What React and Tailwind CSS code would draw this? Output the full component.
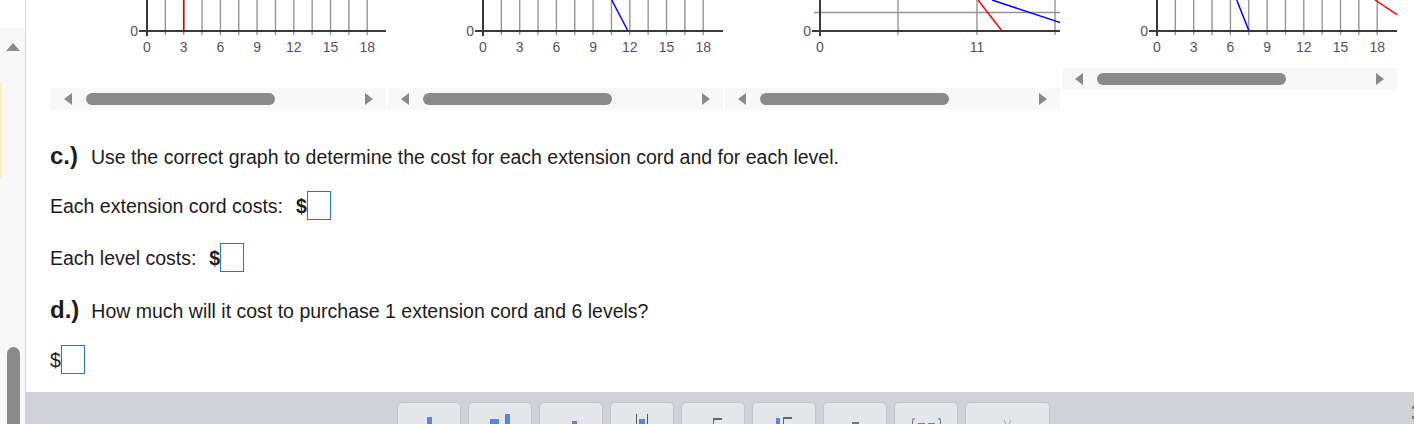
import React from 'react';

const GRID = '#959595';
const AXIS = '#3a3a3a';
const LABEL = '#555555';

const STEP = 18.35;

// ticks every 1.5 units, labels every 3 units (0..18)
const LinearAxisGraph = ({ origin, height, lines }) => {
  const ticks = Array.from({ length: 13 }, (_, i) => origin + i * STEP);
  return (
    <svg width="335" height={height} className="block">
      {ticks.map((x, i) =>
        i === 0 ? null : (
          <line key={i} x1={x} y1="0" x2={x} y2="35" stroke={GRID} strokeWidth="1.4" />
        )
      )}
      {lines}
      <line x1={origin - 8} y1="31" x2="335" y2="31" stroke={AXIS} strokeWidth="2" />
      <line x1={origin} y1="0" x2={origin} y2="36" stroke={AXIS} strokeWidth="2" />
      <text x={origin - 9} y="36" textAnchor="end" fontSize="14" fill={LABEL} fontFamily="Liberation Sans, Arial, sans-serif">
        0
      </text>
      {[0, 3, 6, 9, 12, 15, 18].map((v, i) => (
        <text
          key={v}
          x={origin + i * 2 * STEP}
          y="52"
          textAnchor="middle"
          fontSize="14"
          fill={LABEL}
          fontFamily="Liberation Sans, Arial, sans-serif"
        >
          {v}
        </text>
      ))}
    </svg>
  );
};

const WideGraph = () => (
  <svg width="335" height="88" className="block">
    {[173, 252, 330].map((x) => (
      <line key={x} x1={x} y1="0" x2={x} y2="35" stroke={GRID} strokeWidth="1.4" />
    ))}
    <line x1="89" y1="12.5" x2="335" y2="12.5" stroke={GRID} strokeWidth="1.4" />
    <line x1="253" y1="0" x2="277" y2="31" stroke="#ff0000" strokeWidth="1.5" />
    <line x1="267" y1="0" x2="336" y2="22.8" stroke="#0000ff" strokeWidth="1.5" />
    <line x1="87" y1="31" x2="335" y2="31" stroke={AXIS} strokeWidth="2" />
    <line x1="95" y1="0" x2="95" y2="36" stroke={AXIS} strokeWidth="2" />
    <text x="86" y="36" textAnchor="end" fontSize="14" fill={LABEL} fontFamily="Liberation Sans, Arial, sans-serif">
      0
    </text>
    <text x="95" y="52" textAnchor="middle" fontSize="14" fill={LABEL} fontFamily="Liberation Sans, Arial, sans-serif">
      0
    </text>
    <text x="252" y="52" textAnchor="middle" fontSize="14" fill={LABEL} fontFamily="Liberation Sans, Arial, sans-serif">
      11
    </text>
  </svg>
);

const ScrollTrack = () => (
  <div className="flex h-[22px] w-[335px] items-center bg-[#f8f8f8]">
    <div className="ml-[13px] h-0 w-0 border-y-[6px] border-r-[8px] border-y-transparent border-r-[#8a8a8a]" />
    <div className="ml-[14px] h-[12px] w-[189px] rounded-full bg-[#8a8a8a]" />
    <div className="ml-[90px] h-0 w-0 border-y-[6px] border-l-[8px] border-y-transparent border-l-[#8a8a8a]" />
  </div>
);

const AnswerBox = () => <span className="inline-block h-[29px] w-[24px] border border-[#2d6fd2] bg-white" />;

const keys = [
  { w: 'w-[64px]', icon: <span className="mt-[14px] h-[10px] w-[5px] bg-[#5b86d8]" /> },
  {
    w: 'w-[64px]',
    icon: (
      <span className="mt-[14px] flex items-end gap-[6px]">
        <span className="h-[5px] w-[9px] bg-[#5b86d8]" />
        <span className="h-[10px] w-[5px] bg-[#5b86d8]" />
      </span>
    ),
  },
  { w: 'w-[64px]', icon: <span className="ml-[6px] mt-[18px] h-[6px] w-[5px] bg-[#5b86d8]" /> },
  {
    w: 'w-[64px]',
    icon: (
      <span className="mt-[14px] flex items-end gap-[2px]">
        <span className="h-[10px] w-[1px] bg-[#555]" />
        <span className="h-[5px] w-[6px] bg-[#5b86d8]" />
        <span className="h-[10px] w-[1px] bg-[#555]" />
      </span>
    ),
  },
  {
    w: 'w-[64px]',
    icon: (
      <span className="ml-[8px] mt-[15px] flex">
        <span className="h-[9px] w-[1px] bg-[#666]" />
        <span className="h-[2px] w-[8px] bg-[#666]" />
      </span>
    ),
  },
  {
    w: 'w-[64px]',
    icon: (
      <span className="mt-[14px] flex items-start gap-[3px]">
        <span className="mt-[1px] h-[9px] w-[4px] bg-[#5b86d8]" />
        <span className="flex">
          <span className="h-[10px] w-[1px] bg-[#666]" />
          <span className="h-[2px] w-[8px] bg-[#666]" />
        </span>
      </span>
    ),
  },
  { w: 'w-[64px]', icon: <span className="mt-[19px] h-[5px] w-[7px] bg-[#777]" /> },
  {
    w: 'w-[64px]',
    icon: (
      <span className="mt-[15px] flex items-start gap-[3px]">
        <span className="h-[9px] w-[3px] rounded-l-full border-l border-t border-[#777]" />
        <span className="mt-[5px] h-[4px] w-[7px] bg-[#5b86d8]" />
        <span className="mt-[5px] h-[4px] w-[7px] bg-[#5b86d8]" />
        <span className="h-[9px] w-[3px] rounded-r-full border-r border-t border-[#777]" />
      </span>
    ),
  },
  {
    w: 'w-[85px]',
    icon: (
      <span className="mt-[17px] flex gap-[3px]">
        <span className="h-[7px] w-[1px] rotate-[-20deg] bg-[#aaa]" />
        <span className="h-[7px] w-[1px] rotate-[20deg] bg-[#aaa]" />
      </span>
    ),
  },
];

export default function App() {
  return (
    <div className="flex h-[424px] w-[1414px] overflow-hidden bg-white font-['Liberation_Sans',Arial,sans-serif] text-[#1c1c1c]">
      {/* left page scrollbar */}
      <div className="relative flex w-[26px] shrink-0 flex-col border-r border-[#d4d7dd]">
        <div className="h-[28px]" />
        <div className="relative flex flex-1 flex-col items-center bg-[#f8f8f8] pl-[2px] pr-[1px]">
          <div className="mt-[15px] h-0 w-0 border-x-[7px] border-b-[8px] border-x-transparent border-b-[#8a8a8a]" />
          <div className="mt-auto h-[77px] w-[13px] rounded-t-full bg-[#8a8a8a]" />
        </div>
        <div className="absolute left-0 top-[82px] h-[96px] w-[2px] bg-[#fcefc0]" />
      </div>

      <div className="relative flex flex-1 flex-col">
        {/* graphs, scrolled up */}
        <div className="flex items-start gap-[2px] pl-[25px]">
          <div className="flex flex-col">
            <LinearAxisGraph
              origin={96}
              height={88}
              lines={<line x1="132.7" y1="0" x2="132.7" y2="31" stroke="#e00000" strokeWidth="1.6" />}
            />
            <ScrollTrack />
          </div>
          <div className="flex flex-col">
            <LinearAxisGraph
              origin={95}
              height={88}
              lines={<line x1="223.7" y1="0" x2="240" y2="31" stroke="#0000ff" strokeWidth="1.5" />}
            />
            <ScrollTrack />
          </div>
          <div className="flex flex-col">
            <WideGraph />
            <ScrollTrack />
          </div>
          <div className="flex flex-col">
            <LinearAxisGraph
              origin={95}
              height={68}
              lines={
                <>
                  <line x1="174.7" y1="0" x2="187" y2="31" stroke="#0000ff" strokeWidth="1.5" />
                  <line x1="313" y1="0" x2="337" y2="16" stroke="#ff0000" strokeWidth="1.5" />
                </>
              }
            />
            <ScrollTrack />
          </div>
        </div>

        {/* questions */}
        <div className="flex flex-col pl-[24px] text-[19.5px] leading-[24px]">
          <div className="mt-[34px] flex items-baseline">
            <span className="text-[24px] font-bold">c.)</span>
            <span className="ml-[13px]">
              Use the correct graph to determine the cost for each extension cord and for each level.
            </span>
          </div>
          <div className="mt-[22px] flex h-[29px] items-center">
            <span>Each extension cord costs:</span>
            <span className="ml-[13px] font-bold">$</span>
            <AnswerBox />
          </div>
          <div className="mt-[23px] flex h-[29px] items-center">
            <span>Each level costs:</span>
            <span className="ml-[13px] font-bold">$</span>
            <AnswerBox />
          </div>
          <div className="mt-[26px] flex items-baseline">
            <span className="text-[24px] font-bold">d.)</span>
            <span className="ml-[12px]">How much will it cost to purchase 1 extension cord and 6 levels?</span>
          </div>
          <div className="mt-[22px] flex h-[29px] items-center">
            <span>$</span>
            <AnswerBox />
          </div>
        </div>

        {/* math keyboard */}
        <div className="mt-auto flex h-[32px] gap-[7px] bg-[#d0d2d7] pl-[371px] pt-[10px]">
          {keys.map((k, i) => (
            <div
              key={i}
              className={`${k.w} flex justify-center rounded-t-[5px] border border-b-0 border-[#c3c5ca] bg-[#e5e6e9]`}
            >
              {k.icon}
            </div>
          ))}
        </div>

        <div className="absolute right-0 top-[406px] h-[3px] w-[2px] bg-[#9a7a50]" />
        <div className="absolute right-0 top-[416px] h-[3px] w-[2px] bg-[#9a7a50]" />
      </div>
    </div>
  );
}
